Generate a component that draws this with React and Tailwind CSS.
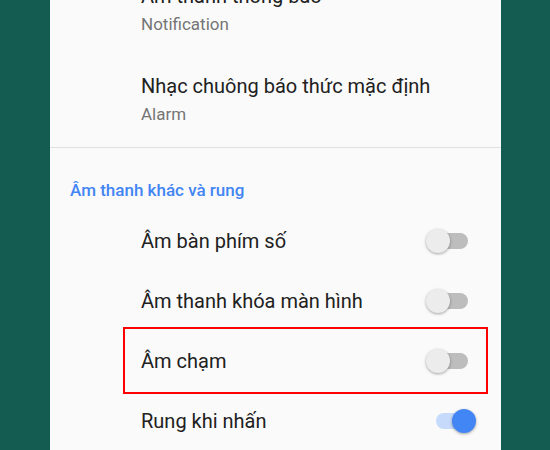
function Toggle({ on }) {
  return (
    <div className="relative w-[32px] h-[16px] shrink-0">
      <div className={`absolute inset-0 rounded-full ${on ? 'bg-[#c6dafc]' : 'bg-[#bdbdbd]'}`}></div>
      <div
        className={`absolute top-[-4px] w-[24px] h-[24px] rounded-full shadow-[0_1px_3px_rgba(0,0,0,0.35)] ${
          on ? 'right-[-8px] bg-[#4285f4]' : 'left-[-10px] bg-[#ececec]'
        }`}
      ></div>
    </div>
  );
}

function SoundItem({ title, subtitle, last }) {
  return (
    <div className={`pl-[91px] pt-[17px] ${last ? 'pb-[19px]' : 'pb-[17px]'}`}>
      <div className="text-[20px] leading-[28px] text-[#212121] whitespace-nowrap">{title}</div>
      <div className="text-[17px] leading-[28px] text-[#757575]">{subtitle}</div>
    </div>
  );
}

function SwitchRow({ label, on, marked }) {
  return (
    <div className="relative h-[60px] flex items-center justify-between pl-[91px] pr-[33px]">
      <span className="text-[20px] text-[#212121]">{label}</span>
      <Toggle on={on} />
      {marked && (
        <div className="absolute left-[73px] right-[13px] top-[-4px] bottom-[-3px] border-2 border-[#ff0000]"></div>
      )}
    </div>
  );
}

export default function App() {
  const rows = [
    { label: 'Âm bàn phím số', on: false },
    { label: 'Âm thanh khóa màn hình', on: false },
    { label: 'Âm chạm', on: false, marked: true },
    { label: 'Rung khi nhấn', on: true },
  ];

  return (
    <div className="w-[550px] h-[450px] bg-[#145c51] overflow-hidden font-['Roboto','Noto_Sans',sans-serif]">
      <div className="ml-[50px] w-[451px] h-full bg-[#fafafa] overflow-hidden">
        <div className="mt-[-35px]">
          <SoundItem title="Âm thanh thông báo" subtitle="Notification" />
          <SoundItem title="Nhạc chuông báo thức mặc định" subtitle="Alarm" last />
          <div className="h-px bg-[#e0e0e0]"></div>
          <div className="pl-[20px] pt-[30px] pb-[9px] text-[17px] leading-[24px] text-[#4285f4] font-medium">
            Âm thanh khác và rung
          </div>
          {rows.map((r) => (
            <SwitchRow key={r.label} {...r} />
          ))}
        </div>
      </div>
    </div>
  );
}
